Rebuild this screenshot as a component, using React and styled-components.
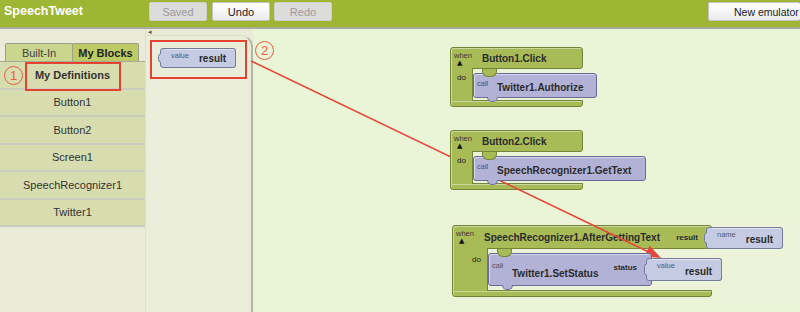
import React from "react";
import styled, { createGlobalStyle } from "styled-components";

const GREEN = "#a8bb57";
const GREEN_DARK = "#74853a";
const GREEN_LIGHT = "#cbd89b";
const CALL = "#b2b2d6";
const CALL_DARK = "#6a6a96";
const VAL = "#c4cbe2";
const VAL_DARK = "#757c9b";
const RED = "#e5432f";

const GlobalStyle = createGlobalStyle`
  html, body { margin: 0; padding: 0; }
  body {
    width: 800px; height: 312px; overflow: hidden;
    background: #eaf4d6;
    font-family: "Liberation Sans", Arial, sans-serif;
  }
`;

const Page = styled.div`
  position: relative;
  width: 800px;
  height: 312px;
  display: flex;
  flex-direction: column;
  overflow: hidden;
  font-family: "Liberation Sans", Arial, sans-serif;
`;

/* ---------- top bar ---------- */
const TopBar = styled.header`
  flex: none;
  height: 29px;
  box-sizing: border-box;
  background: #9fb534;
  border-bottom: 2px solid #a9ab9b;
  display: flex;
  align-items: flex-start;
  padding-top: 2px;
`;

const Brand = styled.div`
  width: 149px;
  padding-left: 4px;
  box-sizing: border-box;
  line-height: 19px;
  font-size: 12.5px;
  font-weight: 700;
  color: #ffffff;
`;

const ToolButton = styled.button`
  width: ${(p) => p.$w || 58}px;
  height: 19px;
  margin: 0;
  margin-right: ${(p) => (p.$mr !== undefined ? p.$mr : 5)}px;
  margin-left: ${(p) => (p.$push ? "auto" : "0")};
  padding: 0 0 0 ${(p) => p.$pl || 0}px;
  text-align: ${(p) => (p.$pl ? "left" : "center")};
  white-space: nowrap;
  border: 1px solid ${(p) => (p.$disabled ? "#d0d0ce" : "#c4c4c4")};
  border-right: ${(p) => (p.$open ? "none" : undefined)};
  border-radius: 2px;
  background: ${(p) =>
    p.$disabled ? "#dcdcdb" : "linear-gradient(#ffffff, #ebebeb)"};
  color: ${(p) => (p.$disabled ? "#9b9b9b" : "#222222")};
  font-family: "Liberation Sans", Arial, sans-serif;
  font-size: ${(p) => p.$fs || 11}px;
  flex: none;
`;

/* ---------- main area ---------- */
const Main = styled.div`
  flex: 1;
  display: flex;
  min-height: 0;
`;

const Sidebar = styled.aside`
  width: 145px;
  flex: none;
  background: #eaecd9;
  padding-top: 14px;
  display: flex;
  flex-direction: column;
`;

const TabRow = styled.div`
  display: flex;
  padding-left: 5px;
  height: 18px;
  border-bottom: 1px solid #a7aa95;
`;

const Tab = styled.div`
  width: ${(p) => p.$w}px;
  height: 18px;
  box-sizing: border-box;
  border: 1px solid #9da089;
  border-bottom: none;
  margin-right: -1px;
  border-radius: 2px 2px 0 0;
  background: ${(p) => (p.$active ? "#bccb63" : "#cad58d")};
  color: ${(p) => (p.$active ? "#222" : "#444")};
  font-weight: ${(p) => (p.$active ? 700 : 400)};
  font-size: 11px;
  display: flex;
  align-items: center;
  justify-content: center;
`;

const DefRow = styled.div`
  height: 25.5px;
  display: flex;
  align-items: center;
  justify-content: center;
  background: #d8ddb0;
  border-bottom: 2px solid #cbcdc0;
  font-size: 11px;
  color: #333;
  font-weight: ${(p) => (p.$bold ? 700 : 400)};
`;

const Drawer = styled.div`
  width: 108px;
  flex: none;
  background: #eaecd9;
  border-left: 1px solid #dde0cd;
  box-sizing: border-box;
  display: flex;
  flex-direction: column;
`;

const DrawerStrip = styled.div`
  height: 6px;
  font-family: "DejaVu Sans", sans-serif;
  font-size: 7px;
  line-height: 6px;
  color: #555;
  padding-left: 2px;
`;

const DrawerPanel = styled.div`
  flex: 1;
  background: #eaedda;
  border-top: 1px solid #d9dcc9;
  border-right: 2px solid #b3b6a4;
  border-top-right-radius: 12px;
  padding: 12px 0 0 12px;
`;

const Canvas = styled.div`
  flex: 1;
  position: relative;
  background: #eaf4d6;
`;

const Selection = styled.div`
  position: absolute;
  left: ${(p) => p.$x}px;
  top: ${(p) => p.$y}px;
  width: ${(p) => p.$w}px;
  height: ${(p) => p.$h}px;
  background: #edf3d8;
`;

/* ---------- blocks ---------- */
const EventWrap = styled.div`
  position: absolute;
  left: ${(p) => p.$x}px;
  top: ${(p) => p.$y}px;
  display: flex;
  flex-direction: column;
  align-items: flex-start;
`;

const HeadRow = styled.div`
  display: flex;
  align-items: flex-start;
`;

const EventHead = styled.div`
  width: ${(p) => p.$w}px;
  height: ${(p) => p.$h}px;
  box-sizing: border-box;
  background: ${GREEN};
  border: 1px solid ${GREEN_DARK};
  border-radius: 3px 3px 3px 0;
  box-shadow: inset 1px 1px 0 ${GREEN_LIGHT};
  display: flex;
  align-items: center;
  padding-left: 3px;
`;

const WhenStack = styled.div`
  width: 28px;
  align-self: flex-start;
  padding-top: 4px;
  display: flex;
  flex-direction: column;
`;

const WhenText = styled.span`
  font-size: 7.5px;
  line-height: 8px;
  color: #3a3a3a;
`;

const Caret = styled.span`
  font-family: "DejaVu Sans", sans-serif;
  font-size: 7px;
  line-height: 7px;
  color: #111;
  padding-left: 3px;
`;

const EventTitle = styled.span`
  font-size: 10px;
  font-weight: 700;
  color: #2b2b2b;
  white-space: nowrap;
`;

const ParamLabel = styled.span`
  margin-left: auto;
  margin-right: 13px;
  font-size: 8px;
  font-weight: 700;
  color: #2b2b2b;
`;

const EventBody = styled.div`
  display: flex;
  align-items: stretch;
`;

const Arm = styled.div`
  width: ${(p) => p.$w}px;
  box-sizing: border-box;
  background: ${GREEN};
  border-left: 1px solid ${GREEN_DARK};
  border-right: 1px solid ${GREEN_DARK};
  box-shadow: inset 1px 0 0 ${GREEN_LIGHT};
  margin: -1px 0 -1px 0;
  position: relative;
  z-index: 1;
  display: flex;
  justify-content: flex-end;
  padding: ${(p) => p.$doTop}px 6px 0 0;
`;

const DoLabel = styled.span`
  font-size: 8px;
  line-height: 9px;
  color: #222;
`;

const Mouth = styled.div`
  padding-top: 4px;
  padding-bottom: ${(p) => p.$pb}px;
  position: relative;
  z-index: 2;
`;

const EventFoot = styled.div`
  width: ${(p) => p.$w}px;
  height: 7px;
  box-sizing: border-box;
  background: ${GREEN};
  border: 1px solid ${GREEN_DARK};
  border-radius: 0 0 3px 3px;
  box-shadow: inset 1px 1px 0 ${GREEN_LIGHT};
`;

const CallRow = styled.div`
  display: flex;
  align-items: center;
`;

const CallBlock = styled.div`
  position: relative;
  width: ${(p) => p.$w}px;
  height: ${(p) => p.$h}px;
  box-sizing: border-box;
  background: ${CALL};
  border: 1px solid ${CALL_DARK};
  border-radius: 3px;
  box-shadow: inset 1px 1px 0 #d6d6ec;
  display: flex;
  align-items: center;
`;

const TopNotch = styled.div`
  position: absolute;
  left: 8px;
  top: -5px;
  width: 15px;
  height: 8px;
  box-sizing: border-box;
  background: ${GREEN};
  border: 1px solid ${GREEN_DARK};
  border-top: none;
  border-radius: 0 0 6px 6px;
`;

const BottomTab = styled.div`
  position: absolute;
  left: 13px;
  bottom: -5px;
  width: 11px;
  height: 5px;
  box-sizing: border-box;
  background: ${CALL};
  border: 1px solid ${CALL_DARK};
  border-top: none;
  border-radius: 0 0 5px 5px;
`;

const CallLabel = styled.span`
  width: 23px;
  box-sizing: border-box;
  padding-left: 3px;
  align-self: flex-start;
  margin-top: ${(p) => p.$top}px;
  font-size: 7.5px;
  line-height: 9px;
  color: #50506e;
`;

const CallTitle = styled.span`
  font-size: 10px;
  font-weight: 700;
  color: #2a2a2a;
  white-space: nowrap;
  transform: translateY(${(p) => p.$dy}px);
`;

const SocketLabel = styled.span`
  margin-left: auto;
  margin-right: 14px;
  font-size: 8px;
  font-weight: 700;
  color: #2a2a2a;
  transform: translateY(-2px);
`;

const ValueWrap = styled.div`
  display: flex;
  height: ${(p) => p.$h}px;
  margin-left: ${(p) => (p.$attach ? -8 : 0)}px;
  margin-top: ${(p) => p.$mt || 0}px;
  position: relative;
  z-index: 3;
`;

const PlugSvg = styled.svg`
  display: block;
  flex: none;
`;

const ValueBody = styled.div`
  display: flex;
  box-sizing: border-box;
  background: ${VAL};
  border: 1px solid ${VAL_DARK};
  border-left: none;
  border-radius: 0 3px 3px 0;
  box-shadow: inset 0 1px 0 #e2e6f3;
  padding: 0 9px 0 5px;
  gap: 10px;
`;

const ValueLabel = styled.span`
  align-self: flex-start;
  margin-top: 3px;
  font-size: 7.5px;
  line-height: 8px;
  color: #555a6e;
`;

const ValueText = styled.span`
  align-self: flex-end;
  margin-bottom: 2px;
  font-size: 10px;
  line-height: 12px;
  font-weight: 700;
  color: #2a2a2a;
`;

/* ---------- annotations ---------- */
const Frame = styled.div`
  position: absolute;
  left: ${(p) => p.$x}px;
  top: ${(p) => p.$y}px;
  width: ${(p) => p.$w}px;
  height: ${(p) => p.$h}px;
  box-sizing: border-box;
  border: 2px solid ${RED};
  pointer-events: none;
`;

const Mark = styled.div`
  position: absolute;
  left: ${(p) => p.$x}px;
  top: ${(p) => p.$y}px;
  width: 19px;
  height: 19px;
  box-sizing: border-box;
  border: 1.5px solid #ec5a42;
  border-radius: 50%;
  color: #ec5a42;
  font-size: 13px;
  line-height: 1;
  display: flex;
  align-items: center;
  justify-content: center;
`;

const ArrowLayer = styled.svg`
  position: absolute;
  left: 0;
  top: 0;
  pointer-events: none;
`;

/* ---------- pieces ---------- */
function Plug({ h }) {
  const b = h - 0.5;
  const a = Math.round(h * 0.28);
  const c = Math.round(h * 0.72);
  const edge = `M8 0.5 H5 Q2.5 0.5 2.5 3 V${a} Q0.5 ${a} 0.5 ${a + 2.5} V${c - 2.5} Q0.5 ${c} 2.5 ${c} V${b - 2.5} Q2.5 ${b} 5 ${b} H8`;
  return (
    <PlugSvg width="8" height={h} viewBox={`0 0 8 ${h}`}>
      <path d={`${edge} Z`} fill={VAL} />
      <path d={edge} fill="none" stroke={VAL_DARK} strokeWidth="1" />
    </PlugSvg>
  );
}

function ValueBlock({ label, value, h, attach, mt }) {
  return (
    <ValueWrap $h={h} $attach={attach} $mt={mt}>
      <Plug h={h} />
      <ValueBody>
        <ValueLabel>{label}</ValueLabel>
        <ValueText>{value}</ValueText>
      </ValueBody>
    </ValueWrap>
  );
}

function EventBlock({ x, y, w, headH, arm, doTop, pb, title, param, children }) {
  return (
    <EventWrap $x={x} $y={y}>
      <HeadRow>
        <EventHead $w={w} $h={headH}>
          <WhenStack>
            <WhenText>when</WhenText>
            <Caret>▲</Caret>
          </WhenStack>
          <EventTitle>{title}</EventTitle>
          {param && <ParamLabel>{param.label}</ParamLabel>}
        </EventHead>
        {param && (
          <ValueBlock label="name" value={param.value} h={22} attach mt={2} />
        )}
      </HeadRow>
      <EventBody>
        <Arm $w={arm} $doTop={doTop}>
          <DoLabel>do</DoLabel>
        </Arm>
        <Mouth $pb={pb}>{children}</Mouth>
      </EventBody>
      <EventFoot $w={w} />
    </EventWrap>
  );
}

function Call({ w, h, title, labelTop, dy, socket }) {
  return (
    <CallRow>
      <CallBlock $w={w} $h={h}>
        <TopNotch />
        <BottomTab />
        <CallLabel $top={labelTop}>call</CallLabel>
        <CallTitle $dy={dy}>{title}</CallTitle>
        {socket && <SocketLabel>{socket.label}</SocketLabel>}
      </CallBlock>
      {socket && <ValueBlock label="value" value={socket.value} h={23} attach />}
    </CallRow>
  );
}

const components = [
  "Button1",
  "Button2",
  "Screen1",
  "SpeechRecognizer1",
  "Twitter1",
];

export default function App() {
  return (
    <Page>
      <GlobalStyle />
      <TopBar>
        <Brand>SpeechTweet</Brand>
        <ToolButton $disabled>Saved</ToolButton>
        <ToolButton $mr={4}>Undo</ToolButton>
        <ToolButton $disabled>Redo</ToolButton>
        <ToolButton $push $open $w={92} $mr={0} $pl={25} $fs={10.5}>
          New emulator
        </ToolButton>
      </TopBar>

      <Main>
        <Sidebar>
          <TabRow>
            <Tab $w={68}>Built-In</Tab>
            <Tab $w={67} $active>
              My Blocks
            </Tab>
          </TabRow>
          <DefRow $bold>My Definitions</DefRow>
          {components.map((c) => (
            <DefRow key={c}>{c}</DefRow>
          ))}
        </Sidebar>

        <Drawer>
          <DrawerStrip>◂</DrawerStrip>
          <DrawerPanel>
            <ValueBlock label="value" value="result" h={20} />
          </DrawerPanel>
        </Drawer>

        <Canvas>
          <Selection $x={194} $y={189} $w={360} $h={85} />

          <EventBlock x={197} y={18} w={133} headH={22} arm={23} doTop={5} pb={2} title="Button1.Click">
            <Call w={124} h={25} title="Twitter1.Authorize" labelTop={5} dy={2} />
          </EventBlock>

          <EventBlock x={197} y={101} w={133} headH={22} arm={23} doTop={5} pb={2} title="Button2.Click">
            <Call w={173} h={25} title="SpeechRecognizer1.GetText" labelTop={5} dy={2} />
          </EventBlock>

          <EventBlock
            x={199}
            y={196}
            w={260}
            headH={24}
            arm={36}
            doTop={7}
            pb={4}
            title="SpeechRecognizer1.AfterGettingText"
            param={{ label: "result", value: "result" }}
          >
            <Call
              w={164}
              h={33}
              title="Twitter1.SetStatus"
              labelTop={7}
              dy={4}
              socket={{ label: "status", value: "result" }}
            />
          </EventBlock>
        </Canvas>
      </Main>

      <Frame $x={25} $y={62} $w={96} $h={29} />
      <Frame $x={150} $y={40} $w={97} $h={39} />
      <Mark $x={4} $y={66}>1</Mark>
      <Mark $x={255} $y={41}>2</Mark>

      <ArrowLayer width="800" height="312" viewBox="0 0 800 312">
        <line
          x1="251"
          y1="61"
          x2="655"
          y2="255"
          stroke="#e5483a"
          strokeWidth="1.6"
        />
        <path d="M661 258 L644.5 256.5 L649.5 245.5 Z" fill="#e5483a" />
      </ArrowLayer>
    </Page>
  );
}
